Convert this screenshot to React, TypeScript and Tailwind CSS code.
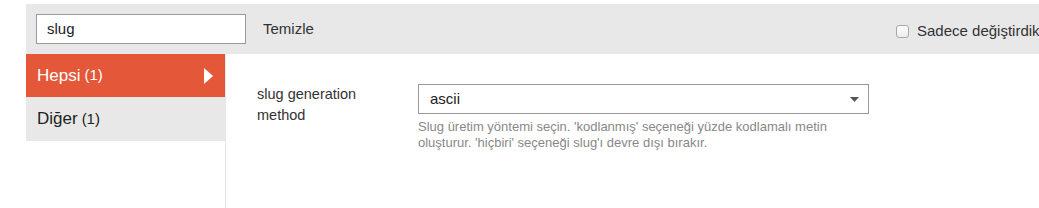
import React from "react";

export default function App() {
  return (
    <div className="w-[1039px] h-[208px] overflow-hidden bg-white font-['Liberation_Sans',Arial,sans-serif] text-[#333]">
      <div className="pl-[26px] pt-[4px]">
        <div className="h-[50px] bg-[#e8e8e8] flex items-center pl-[10px]">
          <div className="w-[210px] h-[30px] border border-[#999] bg-white flex items-center pl-[10px] text-[15px] text-[#222]">
            slug
          </div>
          <div className="ml-[17px] text-[15px] text-[#333]">Temizle</div>
          <div className="ml-auto w-[143px] overflow-hidden whitespace-nowrap flex items-center shrink-0 pt-[5px]">
            <span className="w-[13px] h-[13px] rounded-[3px] border border-[#a8a8a8] bg-[linear-gradient(#fdfdfd,#ececec)] shrink-0" />
            <span className="ml-[8px] text-[15px] text-[#333]">Sadece değiştirdik</span>
          </div>
        </div>
        <div className="flex h-[154px]">
          <div className="w-[199px] shrink-0">
            <div className="h-[43px] bg-[#e45839] flex items-center pl-[11px] pr-[12px] text-white">
              <span className="text-[17px]">Hepsi</span>
              <span className="text-[15px] ml-[4px]">(1)</span>
              <svg className="ml-auto" width="9" height="16" viewBox="0 0 9 16">
                <polygon points="0,0 9,8 0,16" fill="#ffffff" />
              </svg>
            </div>
            <div className="h-[44px] bg-[#e8e8e8] flex items-center pl-[11px] text-[#222]">
              <span className="text-[17px]">Diğer</span>
              <span className="text-[15px] ml-[4px]">(1)</span>
            </div>
          </div>
          <div className="border-l border-[#e6e6e6] flex-1 pl-[31px] pt-[30px] flex">
            <div className="w-[161px] shrink-0 text-[14.5px] leading-[21px] text-[#333]">
              slug generation
              <br />
              method
            </div>
            <div className="w-[451px]">
              <div className="h-[30px] border border-[#999] bg-white flex items-center pl-[11px] pr-[9px] text-[15px] text-[#222]">
                <span>ascii</span>
                <svg className="ml-auto" width="9" height="5" viewBox="0 0 9 5">
                  <polygon points="0,0 9,0 4.5,5" fill="#555" />
                </svg>
              </div>
              <div className="mt-[5px] text-[13px] leading-[16px] text-[#888]">
                Slug üretim yöntemi seçin. 'kodlanmış' seçeneği yüzde kodlamalı metin oluşturur. 'hiçbiri' seçeneği slug'ı devre dışı bırakır.
              </div>
            </div>
          </div>
        </div>
      </div>
    </div>
  );
}
